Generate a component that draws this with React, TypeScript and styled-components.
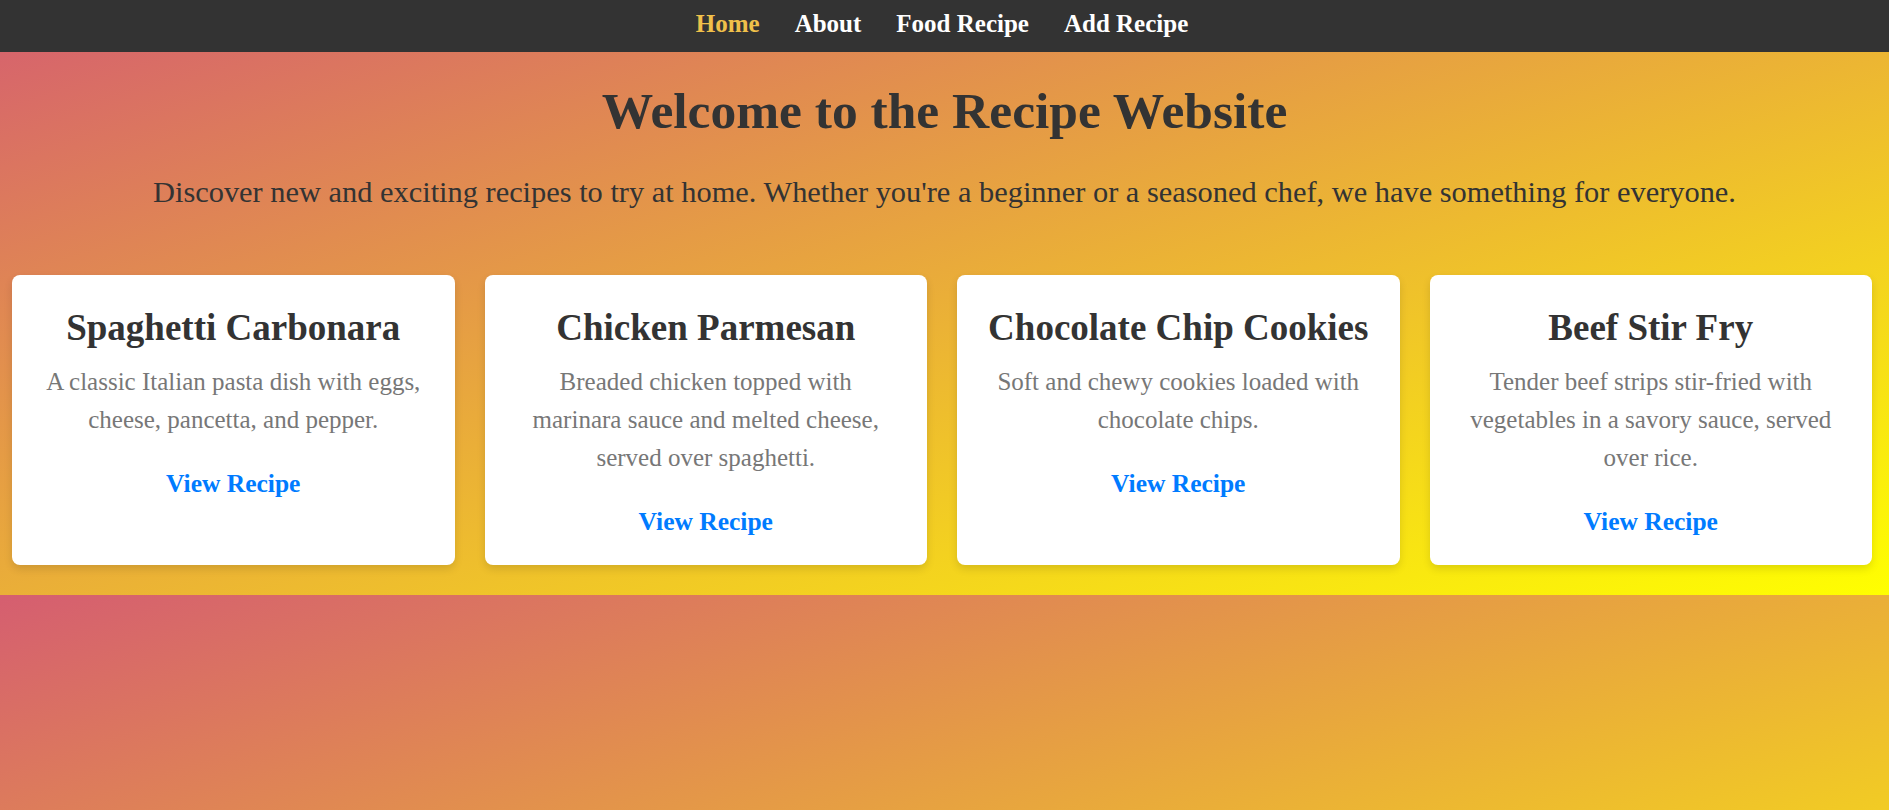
import React from 'react';
import styled, { createGlobalStyle } from 'styled-components';

const GlobalStyle = createGlobalStyle`
  body {
    margin: 0;
    font-family: "Liberation Serif", "Times New Roman", serif;
    background: linear-gradient(to bottom right, #d55e70, #ffff00);
  }
`;

const Nav = styled.nav`
  height: 52px;
  background: #333333;
  display: flex;
  justify-content: center;
  align-items: flex-start;
  gap: 35px;
  padding-right: 5px;
`;

const NavLink = styled.a<{ $active?: boolean }>`
  font-size: 25px;
  line-height: 48px;
  font-weight: 700;
  text-decoration: none;
  color: ${({ $active }) => ($active ? '#f0c04a' : '#ffffff')};
`;

const Hero = styled.header`
  text-align: center;
  padding-top: 31px;
`;

const Title = styled.h1`
  margin: 0;
  font-size: 51.5px;
  line-height: 56px;
  font-weight: 700;
  color: #333333;
`;

const Intro = styled.p`
  margin: 36px 0 0;
  font-size: 30.4px;
  line-height: 34px;
  color: #333333;
`;

const CardRow = styled.section`
  display: flex;
  align-items: stretch;
  gap: 30px;
  padding: 66px 17px 30px 12px;
`;

const Card = styled.div`
  flex: 1;
  background: #ffffff;
  border-radius: 8px;
  box-shadow: 0 4px 8px rgba(0, 0, 0, 0.12);
  padding: 32px 26px 28px;
  text-align: center;
`;

const CardTitle = styled.h2`
  margin: 0;
  font-size: 37px;
  line-height: 42px;
  font-weight: 700;
  white-space: nowrap;
  color: #333333;
`;

const CardText = styled.p`
  margin: 14px 0 0;
  padding: 0 5px;
  font-size: 25px;
  line-height: 38px;
  color: #777777;
`;

const CardLink = styled.a`
  display: block;
  width: fit-content;
  margin: 30px auto 0;
  font-size: 25.5px;
  line-height: 30px;
  font-weight: 700;
  color: #007bff;
  text-decoration: none;
`;

const recipes = [
  {
    name: 'Spaghetti Carbonara',
    desc: 'A classic Italian pasta dish with eggs, cheese, pancetta, and pepper.',
  },
  {
    name: 'Chicken Parmesan',
    desc: 'Breaded chicken topped with marinara sauce and melted cheese, served over spaghetti.',
  },
  {
    name: 'Chocolate Chip Cookies',
    desc: 'Soft and chewy cookies loaded with chocolate chips.',
  },
  {
    name: 'Beef Stir Fry',
    desc: 'Tender beef strips stir-fried with vegetables in a savory sauce, served over rice.',
  },
];

const App = () => {
  return (
    <>
      <GlobalStyle />
      <Nav>
        <NavLink href="#" $active>Home</NavLink>
        <NavLink href="#">About</NavLink>
        <NavLink href="#">Food Recipe</NavLink>
        <NavLink href="#">Add Recipe</NavLink>
      </Nav>
      <Hero>
        <Title>Welcome to the Recipe Website</Title>
        <Intro>
          Discover new and exciting recipes to try at home. Whether you're a beginner or a seasoned chef, we have something for everyone.
        </Intro>
      </Hero>
      <CardRow>
        {recipes.map((r) => (
          <Card key={r.name}>
            <CardTitle>{r.name}</CardTitle>
            <CardText>{r.desc}</CardText>
            <CardLink href="#">View Recipe</CardLink>
          </Card>
        ))}
      </CardRow>
    </>
  );
};

export default App;
